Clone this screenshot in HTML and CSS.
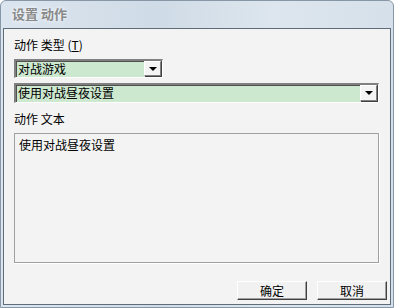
FILE: index.html
```html
<!DOCTYPE html>
<html lang="zh-CN">
<head>
    <meta charset="UTF-8">
    <title>设置 动作</title>
    <link rel="stylesheet" href="styles.css">
</head>
<body>
    <!-- Dialog window -->
    <div class="window">
        <div class="titlebar">设置 动作</div>
        <div class="client">
            <div class="label">动作&nbsp;类型&nbsp;(<u>T</u>)</div>

            <div class="combo combo-short">
                <span class="combo-text">对战游戏</span>
                <span class="combo-btn"><span class="arrow"></span></span>
            </div>

            <div class="combo combo-long">
                <span class="combo-text">使用对战昼夜设置</span>
                <span class="combo-btn"><span class="arrow"></span></span>
            </div>

            <div class="label label-text">动作&nbsp;文本</div>

            <div class="textbox">使用对战昼夜设置</div>

            <div class="buttons">
                <button class="btn">确定</button>
                <button class="btn">取消</button>
            </div>
        </div>
    </div>
</body>
</html>
```

FILE: styles.css
```css
/* Reset */
* {
    margin: 0;
    padding: 0;
    box-sizing: border-box;
}

body {
    font-family: "Noto Sans CJK SC", "DejaVu Sans", sans-serif;
    font-size: 12px;
    color: #000;
    background: #fff;
}

/* Window frame */
.window {
    width: 394px;
    height: 308px;
    border: 1px solid #8797a6;
    border-radius: 6px 6px 0 0;
    background: linear-gradient(to right, #dbe5ef, #cfdbe6 40%, #dde6ee 70%, #d6e0ea);
    padding: 0 2px 2px 2px;
    display: flex;
    flex-direction: column;
}

.titlebar {
    height: 27px;
    padding-left: 9px;
    line-height: 26px;
    font-size: 13px;
    font-weight: bold;
    color: #8a8a8a;
    text-shadow: 0 0 4px #fff;
}

/* Client area */
.client {
    flex: 1;
    background-color: #f3f3f3;
    border: 1px solid #5f6d7b;
    padding: 0 3px 0 10px;
    display: flex;
    flex-direction: column;
}

.label {
    margin-top: 8px;
    height: 16px;
    line-height: 16px;
}

.label u {
    text-decoration: underline;
}

.label-text {
    margin-top: 8px;
}

/* Combo boxes */
.combo {
    display: flex;
    align-items: stretch;
    background-color: #cce8cf;
    border-top: 2px solid #808080;
    border-left: 2px solid #808080;
    border-right: 1px solid #fff;
    border-bottom: 1px solid #fff;
    box-shadow: inset 1px 1px 0 #505050;
}

.combo-short {
    width: 149px;
    height: 19px;
    margin-top: 6px;
}

.combo-long {
    width: 365px;
    height: 20px;
    margin-top: 5px;
}

.combo-text {
    flex: 1;
    padding-left: 2px;
    line-height: 16px;
}

.combo-btn {
    width: 17px;
    background-color: #f4f4f4;
    border-top: 1px solid #fff;
    border-left: 1px solid #fff;
    border-right: 1px solid #808080;
    border-bottom: 1px solid #808080;
    box-shadow: 1px 1px 0 #404040;
    margin: 0 1px 1px 0;
    display: flex;
    align-items: center;
    justify-content: center;
}

.arrow {
    width: 0;
    height: 0;
    border-left: 4px solid transparent;
    border-right: 4px solid transparent;
    border-top: 4px solid #000;
}

/* Text area */
.textbox {
    margin-top: 6px;
    width: 365px;
    height: 130px;
    border: 1px solid #a0a0a0;
    box-shadow: 0 1px 0 #fff, 1px 0 0 #fff;
    padding: 3px 4px;
    line-height: 16px;
}

/* Buttons */
.buttons {
    margin-top: 18px;
    display: flex;
    justify-content: flex-end;
    gap: 10px;
}

.btn {
    width: 70px;
    height: 19px;
    font-family: inherit;
    font-size: 12px;
    color: #000;
    background-color: #f1f1f1;
    border-top: 1px solid #fff;
    border-left: 1px solid #fff;
    border-right: 1px solid #404040;
    border-bottom: 1px solid #404040;
    box-shadow: inset -1px -1px 0 #a0a0a0;
    line-height: 16px;
}
```
